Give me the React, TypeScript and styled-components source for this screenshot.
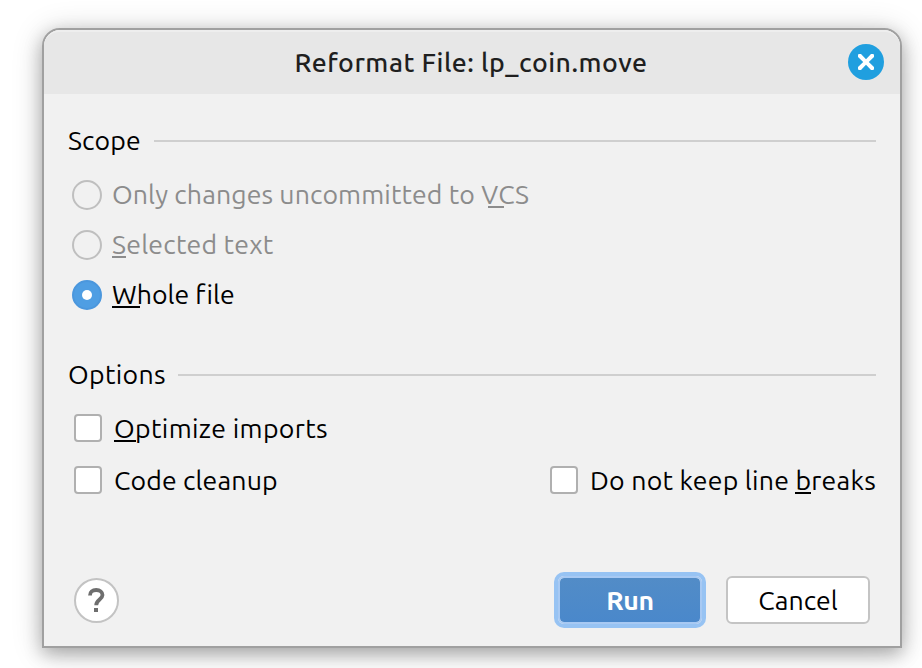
import React from 'react';
import styled, { createGlobalStyle } from 'styled-components';

const GlobalStyle = createGlobalStyle`
  * { box-sizing: border-box; }
  body {
    margin: 0;
    background: #fff;
    font-family: "Ubuntu", "Noto Sans", sans-serif;
    font-size: 26.67px;
    line-height: 34px;
    color: #000;
  }
`;

const Desktop = styled.main`
  height: 668px;
  padding: 28px 20px 20px 42px;
  overflow: hidden;
`;

const Dialog = styled.section`
  display: flex;
  flex-direction: column;
  width: 860px;
  height: 620px;
  border: 2px solid #a0a0a0;
  border-radius: 18px 18px 0 0;
  background: #f1f1f1;
  background-clip: padding-box;
  box-shadow: 0 6px 18px rgba(0, 0, 0, 0.28), 0 3px 32px rgba(0, 0, 0, 0.16);
`;

const TitleBar = styled.header`
  display: grid;
  grid-template-columns: 52px 1fr 52px;
  align-items: center;
  height: 64px;
  padding-bottom: 2px;
  border-top: 2px solid #eeeeee;
  border-radius: 16px 16px 0 0;
  background: #e7e7e7;
`;

const Title = styled.h1`
  grid-column: 2;
  margin: 0;
  padding-right: 2px;
  text-align: center;
  font-size: 26.67px;
  font-weight: 500;
  letter-spacing: 0.5px;
  line-height: 34px;
  color: #1f1f1f;
`;

const CloseButton = styled.button`
  display: grid;
  width: 36px;
  height: 36px;
  padding: 0;
  place-items: center;
  border: 0;
  border-radius: 50%;
  background: #209fdf;
`;

const Content = styled.div`
  display: flex;
  flex: 1;
  flex-direction: column;
  padding: 30px 24px 0;
`;

const Group = styled.div<{ $height: number }>`
  height: ${(p) => p.$height}px;
`;

const GroupHeader = styled.div<{ $gap: number }>`
  display: flex;
  align-items: center;
  gap: ${(p) => p.$gap}px;
  height: 34px;
  &::after {
    content: "";
    flex: 1;
    height: 2px;
    background: #cfcfcf;
  }
`;

const RadioList = styled.div`
  display: flex;
  flex-direction: column;
  gap: 20px;
  padding: 22px 0 0 4px;
`;

const CheckGrid = styled.div`
  display: grid;
  grid-template-columns: 476px 1fr;
  row-gap: 24px;
  padding: 22px 0 0 6px;
`;

const Option = styled.label<{ $gap: number; $height: number; $disabled?: boolean }>`
  display: flex;
  align-items: center;
  gap: ${(p) => p.$gap}px;
  height: ${(p) => p.$height}px;
  color: ${(p) => (p.$disabled ? '#8c8c8c' : '#000')};
`;

const Radio = styled.span<{ $selected?: boolean }>`
  display: grid;
  flex: none;
  place-items: center;
  width: 30px;
  height: 30px;
  border: 2px solid ${(p) => (p.$selected ? '#4b97dd' : '#bfbfbf')};
  border-radius: 50%;
  background: ${(p) => (p.$selected ? '#4f9ee3' : '#f1f1f1')};
  &::after {
    content: "";
    width: 10px;
    height: 10px;
    border-radius: 50%;
    background: ${(p) => (p.$selected ? '#fff' : 'transparent')};
  }
`;

const Checkbox = styled.span`
  flex: none;
  width: 28px;
  height: 28px;
  border: 2px solid #b0b0b0;
  border-radius: 4px;
  background: #fff;
`;

const Label = styled.span<{ $spacing: number; $lift?: boolean }>`
  letter-spacing: ${(p) => p.$spacing}px;
  padding-bottom: ${(p) => (p.$lift ? 2 : 0)}px;
  white-space: nowrap;
`;

const Mnemonic = styled.span<{ $width: number; $offset?: number }>`
  position: relative;
  &::after {
    content: "";
    position: absolute;
    bottom: 1px;
    left: ${(p) => p.$offset ?? 0}px;
    width: ${(p) => p.$width}px;
    height: 2px;
    background: currentColor;
  }
`;

const Footer = styled.footer`
  display: flex;
  align-items: center;
  height: 56px;
  margin: auto 30px 18px;
`;

const HelpButton = styled.button`
  display: grid;
  place-items: center;
  width: 45px;
  height: 45px;
  margin: 1px auto 0 0;
  padding: 0;
  border: 2px solid #c3c3c3;
  border-radius: 50%;
  background: #fff;
`;

const Button = styled.button<{ $primary?: boolean }>`
  width: 144px;
  height: 48px;
  padding: 0;
  border: 2px solid ${(p) => (p.$primary ? '#a7c9f3' : '#c4c4c4')};
  border-radius: 6px;
  background: ${(p) => (p.$primary ? 'linear-gradient(#528cc7, #4a88cb)' : '#fff')};
  background-clip: ${(p) => (p.$primary ? 'padding-box' : 'border-box')};
  box-shadow: ${(p) => (p.$primary ? '0 0 0 4px #97c3f3' : 'none')};
  margin-left: ${(p) => (p.$primary ? 0 : 24)}px;
  color: ${(p) => (p.$primary ? '#fff' : '#000')};
  font: ${(p) => (p.$primary ? 700 : 400)} 26.67px/34px "Ubuntu", "Noto Sans", sans-serif;
  letter-spacing: ${(p) => (p.$primary ? -0.3 : 0)}px;
`;

export default function App() {
  return (
    <Desktop>
      <GlobalStyle />
      <Dialog role="dialog">
        <TitleBar>
          <Title>Reformat File: lp_coin.move</Title>
          <CloseButton aria-label="Close">
            <svg width="16" height="16" viewBox="0 0 16 16">
              <path d="M.8 0h2.2L8 5.2 13 0h2.2l.8.8V3L10.8 8l5.2 5v2.2l-.8.8H13l-5-5.2L3 16H.8l-.8-.8V13l5.2-5L0 3V.8z" fill="#fff" />
            </svg>
          </CloseButton>
        </TitleBar>
        <Content>
          <Group $height={234}>
            <GroupHeader $gap={13}><Label $spacing={0.13} $lift>Scope</Label></GroupHeader>
            <RadioList>
              <Option $gap={10} $height={30} $disabled>
                <Radio />
                <Label $spacing={0.1} $lift>Only changes uncommitted to <Mnemonic $width={16} $offset={6.6}>V</Mnemonic>CS</Label>
              </Option>
              <Option $gap={10} $height={30} $disabled>
                <Radio />
                <Label $spacing={0.22} $lift><Mnemonic $width={14}>S</Mnemonic>elected text</Label>
              </Option>
              <Option $gap={10} $height={30}>
                <Radio $selected />
                <Label $spacing={0.02} $lift><Mnemonic $width={28}>W</Mnemonic>hole file</Label>
              </Option>
            </RadioList>
          </Group>
          <Group $height={160}>
            <GroupHeader $gap={12}><Label $spacing={0.33} $lift>Options</Label></GroupHeader>
            <CheckGrid>
              <Option $gap={12} $height={28}>
                <Checkbox />
                <Label $spacing={0.35}><Mnemonic $width={22}>O</Mnemonic>ptimize imports</Label>
              </Option>
              <span />
              <Option $gap={12} $height={28}>
                <Checkbox />
                <Label $spacing={0.13}>Code cleanup</Label>
              </Option>
              <Option $gap={12} $height={28}>
                <Checkbox />
                <Label $spacing={0.23}>Do not keep line <Mnemonic $width={16}>b</Mnemonic>reaks</Label>
              </Option>
            </CheckGrid>
          </Group>
        </Content>
        <Footer>
          <HelpButton aria-label="Help">
            <svg width="17" height="25" viewBox="0 0 17 25">
              <path d="M2 7.4C2 4 4.4 2 8.2 2s6.3 2 6.3 5c0 4.4-6.3 4.8-6.3 10.2" fill="none" stroke="#6e6e6e" strokeWidth="3.8" />
              <path d="M6 20h4v4H6z" fill="#6e6e6e" />
            </svg>
          </HelpButton>
          <Button $primary>Run</Button>
          <Button>Cancel</Button>
        </Footer>
      </Dialog>
    </Desktop>
  );
}
